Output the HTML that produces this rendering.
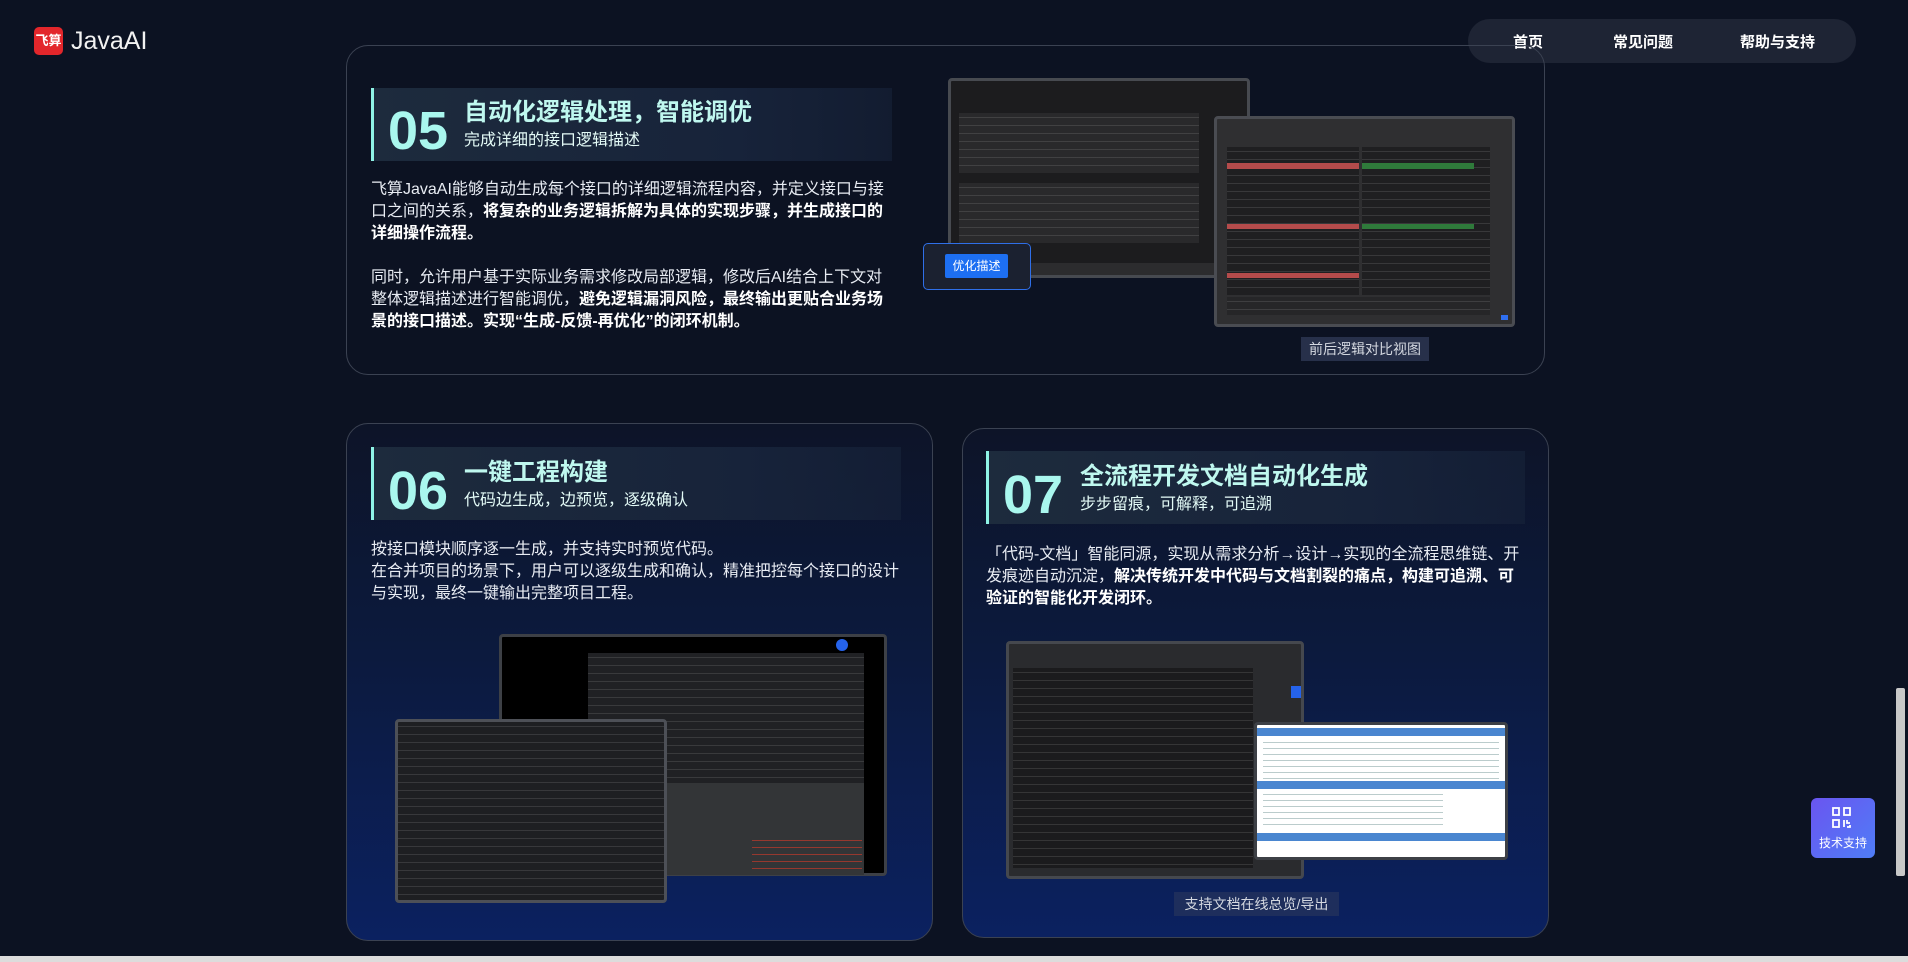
<!DOCTYPE html>
<html><head><meta charset="utf-8"><style>
*{margin:0;padding:0;box-sizing:border-box}
body{width:1908px;height:962px;background:#0c1222;overflow:hidden;position:relative;font-family:"Liberation Sans","Noto Sans CJK SC",sans-serif;color:#fff}
.a{position:absolute}
.card{position:absolute;border:1px solid #3b4252;border-radius:22px}
.tb{position:absolute;border-left:3px solid #8ff3e6;background:linear-gradient(90deg,#1d2b3d,#17233a 70%,rgba(23,35,58,.6))}
.num{position:absolute;font-size:54px;font-weight:bold;color:#a9f7ee;line-height:1}
.tt{position:absolute;font-size:24px;font-weight:bold;color:#bff8ef;white-space:nowrap;line-height:1}
.st{position:absolute;font-size:16px;color:#e4fbf7;white-space:nowrap;line-height:1}
.p{position:absolute;font-size:16px;line-height:22px;color:#e8ecf3;white-space:nowrap}
.p b{color:#fff}
.cap{position:absolute;background:#27304a;color:#d4d8e0;font-size:14px;text-align:center;line-height:24px}
.code{background-image:repeating-linear-gradient(180deg,transparent 0 4px,rgba(200,200,200,.15) 4px 5px,transparent 5px 8px)}
</style></head><body>
<div class="a" style="left:34px;top:27px;width:29px;height:28px;background:#e3262b;border-radius:5px;font-size:13px;font-weight:bold;line-height:28px;text-align:center;color:#fff">飞算</div>
<div class="a" style="left:71px;top:26px;font-size:25px;color:#f2f2f2;line-height:30px">JavaAI</div>
<div class="a" style="left:1468px;top:19px;width:388px;height:44px;background:#1e2434;border-radius:22px"></div>
<div class="a" style="left:1513px;top:31px;font-size:15px;font-weight:bold">首页</div>
<div class="a" style="left:1613px;top:31px;font-size:15px;font-weight:bold">常见问题</div>
<div class="a" style="left:1740px;top:31px;font-size:15px;font-weight:bold">帮助与支持</div>

<div class="card" style="left:346px;top:45px;width:1199px;height:330px"></div>
<div class="tb" style="left:371px;top:88px;width:521px;height:73px"></div>
<div class="num" style="left:388px;top:104px">05</div>
<div class="tt" style="left:464px;top:101px">自动化逻辑处理，智能调优</div>
<div class="st" style="left:464px;top:133px">完成详细的接口逻辑描述</div>
<div class="p" style="left:371px;top:179px">飞算JavaAI能够自动生成每个接口的详细逻辑流程内容，并定义接口与接<br>口之间的关系，<b>将复杂的业务逻辑拆解为具体的实现步骤，并生成接口的<br>详细操作流程。</b></div>
<div class="p" style="left:371px;top:267px">同时，允许用户基于实际业务需求修改局部逻辑，修改后AI结合上下文对<br>整体逻辑描述进行智能调优，<b>避免逻辑漏洞风险，最终输出更贴合业务场<br>景的接口描述。实现“生成-反馈-再优化”的闭环机制。</b></div>
<div class="a" style="left:948px;top:78px;width:302px;height:200px;background:#1c1c1e;border:3px solid #474a50;border-radius:4px">
 <div class="a code" style="left:8px;top:32px;width:240px;height:60px;background-color:#29292b"></div>
 <div class="a code" style="left:8px;top:102px;width:240px;height:60px;background-color:#29292b"></div>
 <div class="a" style="left:0;bottom:0;width:100%;height:12px;background:#2c2c2e"></div>
</div>
<div class="a" style="left:1214px;top:116px;width:301px;height:211px;background:#2f2f31;border:3px solid #4a4c52;border-radius:4px">
 <div class="a code" style="left:10px;top:28px;width:132px;height:148px;background-color:#1f1f21"></div>
 <div class="a code" style="left:145px;top:28px;width:128px;height:148px;background-color:#1f1f21"></div>
 <div class="a" style="left:10px;top:44px;width:132px;height:6px;background:#b44b4b"></div>
 <div class="a" style="left:145px;top:44px;width:112px;height:6px;background:#2f7a3b"></div>
 <div class="a" style="left:10px;top:105px;width:132px;height:5px;background:#b44b4b"></div>
 <div class="a" style="left:145px;top:105px;width:112px;height:5px;background:#2f7a3b"></div>
 <div class="a" style="left:10px;top:154px;width:132px;height:5px;background:#b44b4b"></div>
 <div class="a code" style="left:10px;top:178px;width:263px;height:18px;background-color:#262628"></div>
 <div class="a" style="left:284px;top:196px;width:7px;height:5px;background:#2f6ff0"></div>
</div>
<div class="a" style="left:923px;top:243px;width:108px;height:47px;background:#1b2130;border:1px solid #2f6fe8;border-radius:5px"></div>
<div class="a" style="left:945px;top:254px;width:63px;height:24px;background:#1d6ff2;border-radius:2px;font-size:12px;line-height:24px;text-align:center">优化描述</div>
<div class="cap" style="left:1301px;top:337px;width:128px">前后逻辑对比视图</div>

<div class="card" style="left:346px;top:423px;width:587px;height:518px;background:linear-gradient(180deg,#0d1428 0%,#0c1a3e 45%,#0b2160 100%)"></div>
<div class="tb" style="left:371px;top:447px;width:530px;height:73px"></div>
<div class="num" style="left:388px;top:464px">06</div>
<div class="tt" style="left:464px;top:461px">一键工程构建</div>
<div class="st" style="left:464px;top:493px">代码边生成，边预览，逐级确认</div>
<div class="p" style="left:371px;top:539px">按接口模块顺序逐一生成，并支持实时预览代码。<br>在合并项目的场景下，用户可以逐级生成和确认，精准把控每个接口的设计<br>与实现，最终一键输出完整项目工程。</div>
<div class="a" style="left:499px;top:634px;width:388px;height:242px;background:#000;border:3px solid #3d4046;border-radius:4px">
 <div class="a" style="left:86px;top:16px;width:276px;height:222px;background:#333537"></div>
 <div class="a code" style="left:86px;top:16px;width:276px;height:130px;background-color:#202124"></div>
 <div class="a" style="left:334px;top:2px;width:12px;height:12px;border-radius:50%;background:#2563eb"></div>
 <div class="a" style="left:250px;top:200px;width:110px;height:32px;background:repeating-linear-gradient(180deg,transparent 0 3px,rgba(192,57,43,.7) 3px 4px,transparent 4px 7px)"></div>
</div>
<div class="a code" style="left:395px;top:719px;width:272px;height:184px;background-color:#1e1f22;border:3px solid #4d5057;border-radius:4px"></div>

<div class="card" style="left:962px;top:428px;width:587px;height:510px;background:linear-gradient(180deg,#0d1428 0%,#0c1a3e 45%,#0b2160 100%)"></div>
<div class="tb" style="left:986px;top:451px;width:539px;height:73px"></div>
<div class="num" style="left:1003px;top:468px">07</div>
<div class="tt" style="left:1080px;top:465px">全流程开发文档自动化生成</div>
<div class="st" style="left:1080px;top:497px">步步留痕，可解释，可追溯</div>
<div class="p" style="left:986px;top:544px">「代码-文档」智能同源，实现从需求分析→设计→实现的全流程思维链、开<br>发痕迹自动沉淀，<b>解决传统开发中代码与文档割裂的痛点，构建可追溯、可<br>验证的智能化开发闭环。</b></div>
<div class="a" style="left:1006px;top:641px;width:298px;height:238px;background:#2a2b2e;border:3px solid #45484e;border-radius:4px">
 <div class="a code" style="left:4px;top:24px;width:240px;height:200px;background-color:#1b1b1d"></div>
 <div class="a" style="left:282px;top:42px;width:10px;height:12px;background:#2563eb"></div>
</div>
<div class="a" style="left:1254px;top:722px;width:254px;height:138px;background:#fff;border:3px solid #3d4046;border-radius:4px">
 <div class="a" style="left:0;top:3px;width:100%;height:8px;background:#4a86d0"></div>
 <div class="a" style="left:0;top:56px;width:100%;height:8px;background:#4a86d0"></div>
 <div class="a" style="left:0;top:108px;width:100%;height:8px;background:#4a86d0"></div>
 <div class="a" style="left:6px;top:14px;width:236px;height:40px;background:repeating-linear-gradient(180deg,transparent 0 3px,#bcc 3px 4px,transparent 4px 6px)"></div>
 <div class="a" style="left:6px;top:66px;width:180px;height:38px;background:repeating-linear-gradient(180deg,transparent 0 3px,#bcc 3px 4px,transparent 4px 6px)"></div>
</div>
<div class="cap" style="left:1174px;top:892px;width:165px;background:#1e2e5c">支持文档在线总览/导出</div>

<div class="a" style="left:1811px;top:798px;width:64px;height:60px;border-radius:6px;background:linear-gradient(135deg,#6a55f0,#4f7df7)"></div>
<svg class="a" style="left:1831px;top:806px" width="22" height="24" viewBox="0 0 22 24" fill="none" stroke="#fff" stroke-width="1.8"><rect x="2" y="2" width="6" height="7"/><rect x="13" y="2" width="6" height="7"/><rect x="2" y="14" width="6" height="7"/><path d="M13 14v7M16 14v3h3M16 21h3v-2"/></svg>
<div class="a" style="left:1811px;top:834px;width:64px;text-align:center;font-size:12px">技术支持</div>

<div class="a" style="left:1896px;top:0;width:12px;height:962px;background:#0c1222"></div>
<div class="a" style="left:1896px;top:688px;width:9px;height:188px;background:#c9c9c9;border-radius:2px"></div>
<div class="a" style="left:0;top:956px;width:1908px;height:6px;background:#dcdcdc"></div>
</body></html>
